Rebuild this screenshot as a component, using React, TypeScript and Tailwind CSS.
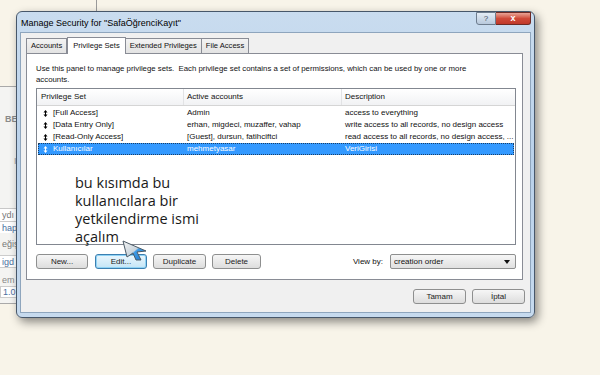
import React from "react";

const ui = { fontFamily: '"Liberation Sans", Arial, sans-serif' };

const rows = [
  { name: "[Full Access]", acc: "Admin", desc: "access to everything" },
  { name: "[Data Entry Only]", acc: "erhan, migdeci, muzaffer, vahap", desc: "write access to all records, no design access" },
  { name: "[Read-Only Access]", acc: "[Guest], dursun, fatihciftci", desc: "read access to all records, no design access, ..." },
  { name: "Kullanıcılar", acc: "mehmetyasar", desc: "VeriGirisi", sel: true },
];

function Grip({ light }: { light?: boolean }) {
  const c = light ? "#ffffff" : "#000000";
  return (
    <svg width="5" height="7" viewBox="0 0 5 7" className="shrink-0">
      <polygon points="2.5,0 4.5,2.5 0.5,2.5" fill={c} />
      <polygon points="0.5,4.5 4.5,4.5 2.5,7" fill={c} />
      <rect x="2" y="2" width="1" height="3" fill={c} />
    </svg>
  );
}

function Btn({ label, focus, w }: { label: string; focus?: boolean; w: string }) {
  return (
    <div
      className={`${w} h-[15px] flex items-center justify-center rounded-[3px] border text-[8px] text-[#222] ${
        focus
          ? "border-[#3c7fb1] bg-gradient-to-b from-[#eaf6fd] to-[#c4e5f6] shadow-[inset_0_0_0_1px_#8fd3f5]"
          : "border-[#8e8f8f] bg-gradient-to-b from-[#f6f6f6] to-[#dddddd]"
      }`}
    >
      {label}
    </div>
  );
}

function Cursor() {
  return (
    <svg width="26" height="22" viewBox="0 0 26 22" className="absolute left-[122px] top-[240px]">
      <defs>
        <linearGradient id="cg" x1="0" y1="0" x2="1" y2="1">
          <stop offset="0" stopColor="#f4f4f4" />
          <stop offset="0.5" stopColor="#c9d4dc" />
          <stop offset="0.55" stopColor="#3d9be6" />
          <stop offset="1" stopColor="#1e78cc" />
        </linearGradient>
      </defs>
      <polygon points="1,1 24,11 15,12 19,20 14,20 11,13 5,17" fill="url(#cg)" stroke="#4b5a66" strokeWidth="1" strokeLinejoin="round" />
    </svg>
  );
}

export default function App() {
  return (
    <div className="relative w-[600px] h-[375px] overflow-hidden bg-[#f8f4e9]" style={ui}>
      {/* background window behind the dialog */}
      <div className="absolute left-[96px] top-0 h-[12px] w-px bg-[#9a9a9a]" />
      <div className="absolute left-0 top-[86px] w-[20px] h-[218px] border-t border-b border-[#a9a9a9] bg-[#f4f4f2] text-[9px] text-[#777]">
        <div className="mt-[26px] pl-[5px] font-bold text-[#8a8a8a]">BE</div>
        <div className="mt-[28px] pl-[14px] text-[#999]">I</div>
        <div className="mt-[40px] h-px bg-[#c8c8c8]" />
        <div className="h-[12px] bg-white pl-[2px] leading-[12px] text-[#777]">ydı</div>
        <div className="h-[12px] border-t border-[#ccc] bg-white pl-[2px] leading-[12px] text-[#4a6fa0]">hap</div>
        <div className="mt-[5px] h-[12px] pl-[2px] leading-[12px] text-[#777]">eğiş</div>
        <div className="mt-[5px] h-[13px] border-t border-b border-[#ccc] bg-white pl-[2px] leading-[12px] text-[#4a6fa0]">igd</div>
        <div className="mt-[6px] h-[12px] pl-[2px] leading-[12px] text-[#888]">em</div>
        <div className="h-[12px] border border-[#ccc] bg-white pl-[2px] leading-[10px] text-[#4a6fa0]">1.0</div>
      </div>

      {/* dialog window */}
      <div className="absolute left-[16px] top-[11px] w-[519px] h-[307px] rounded-[6px] border border-[#47576a] bg-gradient-to-b from-[#c9dcef] via-[#b9d1ea] to-[#c6daee] shadow-[3px_4px_10px_rgba(0,0,0,0.45)] flex flex-col">
        <div className="relative h-[20px] flex items-center pl-[4px] pt-[3px] text-[9px] text-black">
          Manage Security for "SafaÖğrenciKayıt"
          <div className="absolute right-[3px] top-0 flex">
            <div className="w-[20px] h-[13px] rounded-bl-[3px] border border-[#6d7c8d] bg-gradient-to-b from-[#e4ecf5] to-[#b8c9dc] flex items-center justify-center text-[8px] text-[#3c4b5c]">
              ?
            </div>
            <div className="w-[35px] h-[13px] rounded-br-[3px] border border-l-0 border-[#6e2a24] bg-gradient-to-b from-[#e8a497] via-[#cf4a39] to-[#c0392b] flex items-center justify-center text-[9px] font-bold text-white">
              x
            </div>
          </div>
        </div>
        <div className="mx-[3px] mb-[4px] flex-1 border border-[#8ea5bd] bg-[#f0f0f0] flex flex-col">
          {/* tabs */}
          <div className="ml-[5px] mt-[3px] flex items-end h-[17px] text-[7.6px] text-[#111]">
            <div className="h-[15px] px-[4px] flex items-center border border-b-0 border-[#898c95] bg-gradient-to-b from-[#f3f3f3] to-[#e3e3e3]">Accounts</div>
            <div className="h-[17px] -mb-px px-[5px] flex items-center border border-b-0 border-[#898c95] bg-white relative z-10">Privilege Sets</div>
            <div className="h-[15px] px-[4px] flex items-center border border-b-0 border-l-0 border-[#898c95] bg-gradient-to-b from-[#f3f3f3] to-[#e3e3e3]">Extended Privileges</div>
            <div className="h-[15px] px-[4px] flex items-center border border-b-0 border-l-0 border-[#898c95] bg-gradient-to-b from-[#f3f3f3] to-[#e3e3e3]">File Access</div>
          </div>
          <div className="relative ml-[5px] mr-[7px] h-[227px] border border-[#898c95] bg-white pl-[9px] pr-[6px] pt-[9px] flex flex-col">
            <div className="text-[7.8px] leading-[11px] text-[#111]">
              Use this panel to manage privilege sets.&nbsp; Each privilege set contains a set of permissions, which can be used by one or more
              <br />
              accounts.
            </div>
            {/* list */}
            <div className="mt-[3px] h-[157px] w-[480px] border border-[#828790] bg-white text-[8px] text-[#111]">
              <div className="h-[17px] flex bg-gradient-to-b from-white to-[#f1f2f4] border-b border-[#d5d5d5]">
                <div className="w-[147px] pl-[4px] flex items-center border-r border-[#e2e3e5]">Privilege Set</div>
                <div className="w-[158px] pl-[3px] flex items-center border-r border-[#e2e3e5]">Active accounts</div>
                <div className="flex-1 pl-[3px] flex items-center">Description</div>
              </div>
              <div className="mt-[1px]">
                {rows.map((r) => (
                  <div
                    key={r.name}
                    className={`h-[12px] mx-[1px] flex items-center ${
                      r.sel ? "bg-[#3399ff] text-white outline-1 outline-dotted outline-[#1a3f66] -outline-offset-1" : ""
                    }`}
                  >
                    <div className="w-[146px] pl-[5px] flex items-center gap-[5px]">
                      <Grip light={r.sel} />
                      {r.name}
                    </div>
                    <div className="w-[158px] pl-[3px]">{r.acc}</div>
                    <div className="flex-1 pl-[3px] whitespace-nowrap">{r.desc}</div>
                  </div>
                ))}
              </div>
            </div>
            {/* buttons */}
            <div className="mt-[9px] flex items-center">
              <Btn label="New..." w="w-[52px]" />
              <div className="w-[7px]" />
              <Btn label="Edit..." w="w-[52px]" focus />
              <div className="w-[6px]" />
              <Btn label="Duplicate" w="w-[53px]" />
              <div className="w-[6px]" />
              <Btn label="Delete" w="w-[49px]" />
              <div className="flex-1" />
              <span className="text-[8px] text-[#111] mr-[7px]">View by:</span>
              <div className="w-[126px] h-[15px] border border-[#8e8f8f] rounded-[2px] bg-gradient-to-b from-[#f6f6f6] to-[#e0e0e0] flex items-center pl-[3px] pr-[5px] text-[8px] text-[#111]">
                <span className="flex-1">creation order</span>
                <svg width="6" height="4" viewBox="0 0 6 4">
                  <polygon points="0,0 6,0 3,4" fill="#111" />
                </svg>
              </div>
            </div>

            {/* annotation overlay */}
            <div
              className="absolute left-[48px] top-[120px] text-[14.5px] leading-[18px] text-[#1a1a1a]"
              style={{ fontFamily: '"Open Sans", "Noto Sans", sans-serif' }}
            >
              bu kısımda bu
              <br />
              kullanıcılara bir
              <br />
              yetkilendirme ismi
              <br />
              açalım
            </div>
          </div>
          <div className="mt-[9px] mr-[5px] flex justify-end gap-[6px]">
            <Btn label="Tamam" w="w-[53px]" />
            <Btn label="İptal" w="w-[53px]" />
          </div>
        </div>
      </div>
      <Cursor />
    </div>
  );
}
